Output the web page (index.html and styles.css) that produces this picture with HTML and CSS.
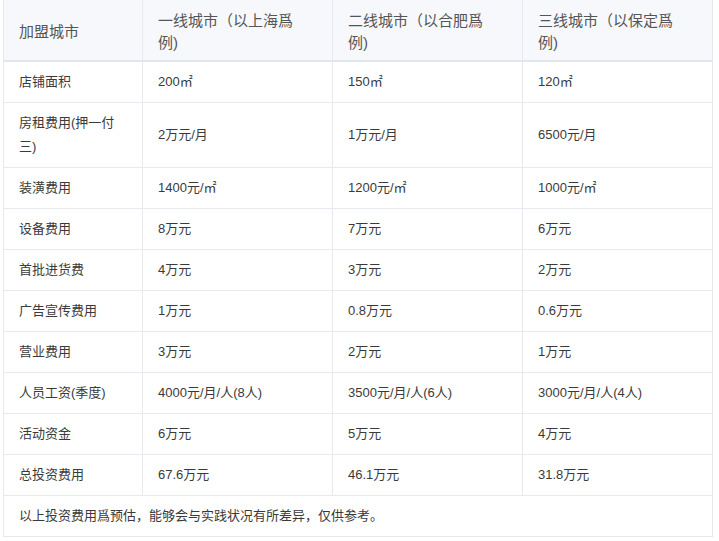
FILE: index.html
```html
<!DOCTYPE html>
<html lang="zh-CN">
<head>
<meta charset="utf-8">
<title>加盟费用</title>
<link rel="stylesheet" href="styles.css">
</head>
<body>
<table class="cost-table">
  <colgroup>
    <col class="col-first">
    <col class="col-city">
    <col class="col-city">
    <col class="col-city">
  </colgroup>
  <thead>
    <tr>
      <th>加盟城市</th>
      <th>一线城市（以上海爲例)</th>
      <th>二线城市（以合肥爲例)</th>
      <th>三线城市（以保定爲例)</th>
    </tr>
  </thead>
  <tbody>
    <tr><td>店铺面积</td><td>200㎡</td><td>150㎡</td><td>120㎡</td></tr>
    <tr><td>房租费用(押一付三)</td><td>2万元/月</td><td>1万元/月</td><td>6500元/月</td></tr>
    <tr><td>装潢费用</td><td>1400元/㎡</td><td>1200元/㎡</td><td>1000元/㎡</td></tr>
    <tr><td>设备费用</td><td>8万元</td><td>7万元</td><td>6万元</td></tr>
    <tr><td>首批进货费</td><td>4万元</td><td>3万元</td><td>2万元</td></tr>
    <tr><td>广告宣传费用</td><td>1万元</td><td>0.8万元</td><td>0.6万元</td></tr>
    <tr><td>营业费用</td><td>3万元</td><td>2万元</td><td>1万元</td></tr>
    <tr><td>人员工资(季度)</td><td>4000元/月/人(8人)</td><td>3500元/月/人(6人)</td><td>3000元/月/人(4人)</td></tr>
    <tr><td>活动资金</td><td>6万元</td><td>5万元</td><td>4万元</td></tr>
    <tr><td>总投资费用</td><td>67.6万元</td><td>46.1万元</td><td>31.8万元</td></tr>
    <tr><td class="note" colspan="4">以上投资费用爲预估，能够会与实践状况有所差异，仅供参考。</td></tr>
  </tbody>
</table>
</body>
</html>
```

FILE: styles.css
```css
html, body {
  margin: 0;
  padding: 0;
  background: #ffffff;
}

body {
  font-family: "Liberation Sans", "Noto Sans CJK SC", sans-serif;
  color: #3a3a3a;
}

.cost-table {
  margin-left: 3px;
  width: 710px;
  border-collapse: collapse;
  table-layout: fixed;
}

.col-first { width: 139px; }
.col-city { width: 190px; }

.cost-table th {
  background: #f6f8fb;
  font-size: 15px;
  font-weight: normal;
  color: #555;
  text-align: left;
  line-height: 22px;
  padding: 10px 30px 6px 15px;
  border-left: 1px solid #e6e9f0;
  border-right: 1px solid #e6e9f0;
  border-bottom: 2px solid #e2e7ef;
  vertical-align: middle;
}

.cost-table td {
  font-size: 13px;
  line-height: 24px;
  padding: 8px 15px;
  border: 1px solid #e6e9f0;
  vertical-align: middle;
  color: #3a3a3a;
}

.cost-table tbody tr:first-child td {
  border-top: none;
}

.cost-table td.note {
  padding: 8px 15px;
}
```
